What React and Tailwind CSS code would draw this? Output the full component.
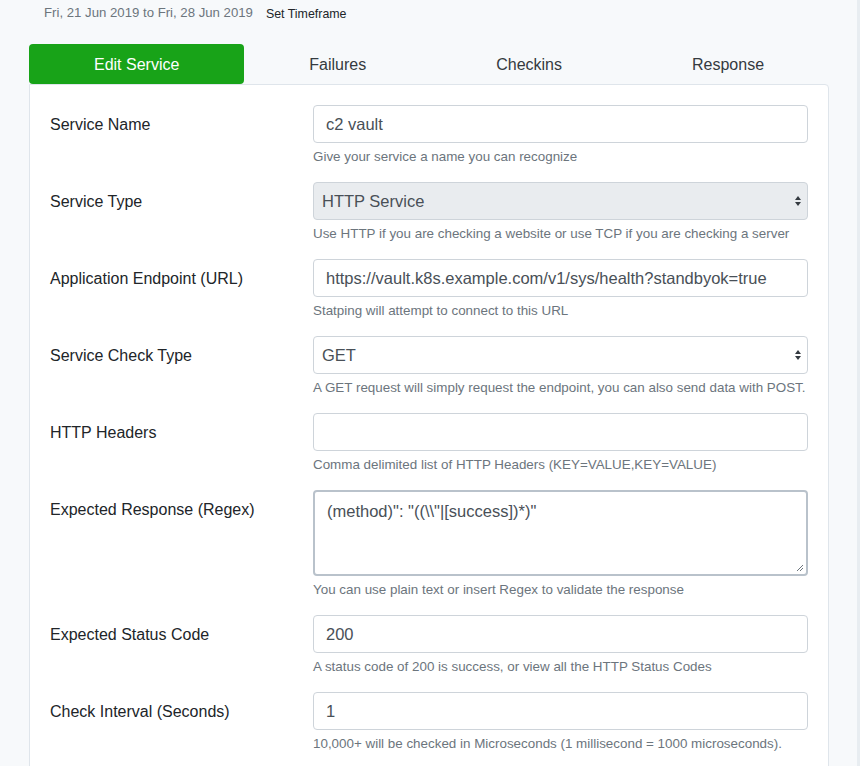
import React from "react";

const font = { fontFamily: "'Liberation Sans', Arial, sans-serif" };

const SelectArrows = () => (
  <svg className="absolute right-[5px] top-1/2 -translate-y-1/2 w-[8px] h-[12px]" viewBox="0 0 8 12">
    <path d="M4 1L7 5H1z" fill="#343a40" />
    <path d="M4 11L7 7H1z" fill="#343a40" />
  </svg>
);

const Row = ({ label, help, children }) => (
  <div className="flex mb-4">
    <label className="w-[263px] shrink-0 pt-[8px] text-[16px] leading-6 text-[#212529]">{label}</label>
    <div className="flex-1">
      {children}
      <div className="mt-1 text-[13.4px] leading-[19px] text-[#6c757d] whitespace-nowrap">{help}</div>
    </div>
  </div>
);

const inputClass =
  "h-[38px] w-full rounded border border-[#ced4da] bg-white px-3 pt-[1px] flex items-center text-[16.5px] text-[#495057]";

export default function App() {
  return (
    <div className="min-h-[766px] w-[860px] bg-[#f7f9fb] border-r-[3px] border-[#e8edf1]" style={font}>
      <div className="pl-[29px] w-[829px]">
        <div className="flex items-end h-[22px] pl-[15px]">
          <span className="text-[13.2px] text-[#6c757d] leading-[18px]">Fri, 21 Jun 2019 to Fri, 28 Jun 2019</span>
          <span className="ml-[13px] text-[12.4px] text-[#212529] leading-[16px]">Set Timeframe</span>
        </div>

        <div className="flex mt-[22px] h-[40px]">
          {["Edit Service", "Failures", "Checkins", "Response"].map((t, i) => (
            <div
              key={t}
              className={
                i === 0
                  ? "flex-auto px-4 pt-[2px] flex items-center justify-center rounded bg-[#18a318] text-white text-[16px]"
                  : "flex-auto px-4 pt-[2px] flex items-center justify-center text-[#343a40] text-[16px]"
              }
            >
              {t}
            </div>
          ))}
        </div>

        <div className="bg-white border border-[#dfe5eb] rounded-tr px-[20px] pt-[20px] pb-4">
          <Row label="Service Name" help="Give your service a name you can recognize">
            <div className={inputClass}>c2 vault</div>
          </Row>
          <Row label="Service Type" help="Use HTTP if you are checking a website or use TCP if you are checking a server">
            <div className={inputClass + " relative !bg-[#e9ecef] !px-2"}>
              HTTP Service
              <SelectArrows />
            </div>
          </Row>
          <Row label="Application Endpoint (URL)" help="Statping will attempt to connect to this URL">
            <div className={inputClass}>https://vault.k8s.example.com/v1/sys/health?standbyok=true</div>
          </Row>
          <Row label="Service Check Type" help="A GET request will simply request the endpoint, you can also send data with POST.">
            <div className={inputClass + " relative !px-2"}>
              GET
              <SelectArrows />
            </div>
          </Row>
          <Row label="HTTP Headers" help="Comma delimited list of HTTP Headers (KEY=VALUE,KEY=VALUE)">
            <div className={inputClass}></div>
          </Row>
          <Row label="Expected Response (Regex)" help="You can use plain text or insert Regex to validate the response">
            <div className="relative h-[86px] w-full rounded border-2 border-[#b9c2cb] bg-white px-3 pt-[7px] text-[16.5px] leading-6 text-[#495057]">
              (method)": "((\\"|[success])*)"
              <svg className="absolute right-[2px] bottom-[2px] w-[8px] h-[8px]" viewBox="0 0 8 8">
                <path d="M7 1L1 7M7 4L4 7" stroke="#6c757d" strokeWidth="1" />
              </svg>
            </div>
          </Row>
          <Row label="Expected Status Code" help="A status code of 200 is success, or view all the HTTP Status Codes">
            <div className={inputClass}>200</div>
          </Row>
          <Row label="Check Interval (Seconds)" help="10,000+ will be checked in Microseconds (1 millisecond = 1000 microseconds).">
            <div className={inputClass}>1</div>
          </Row>
        </div>
      </div>
    </div>
  );
}
